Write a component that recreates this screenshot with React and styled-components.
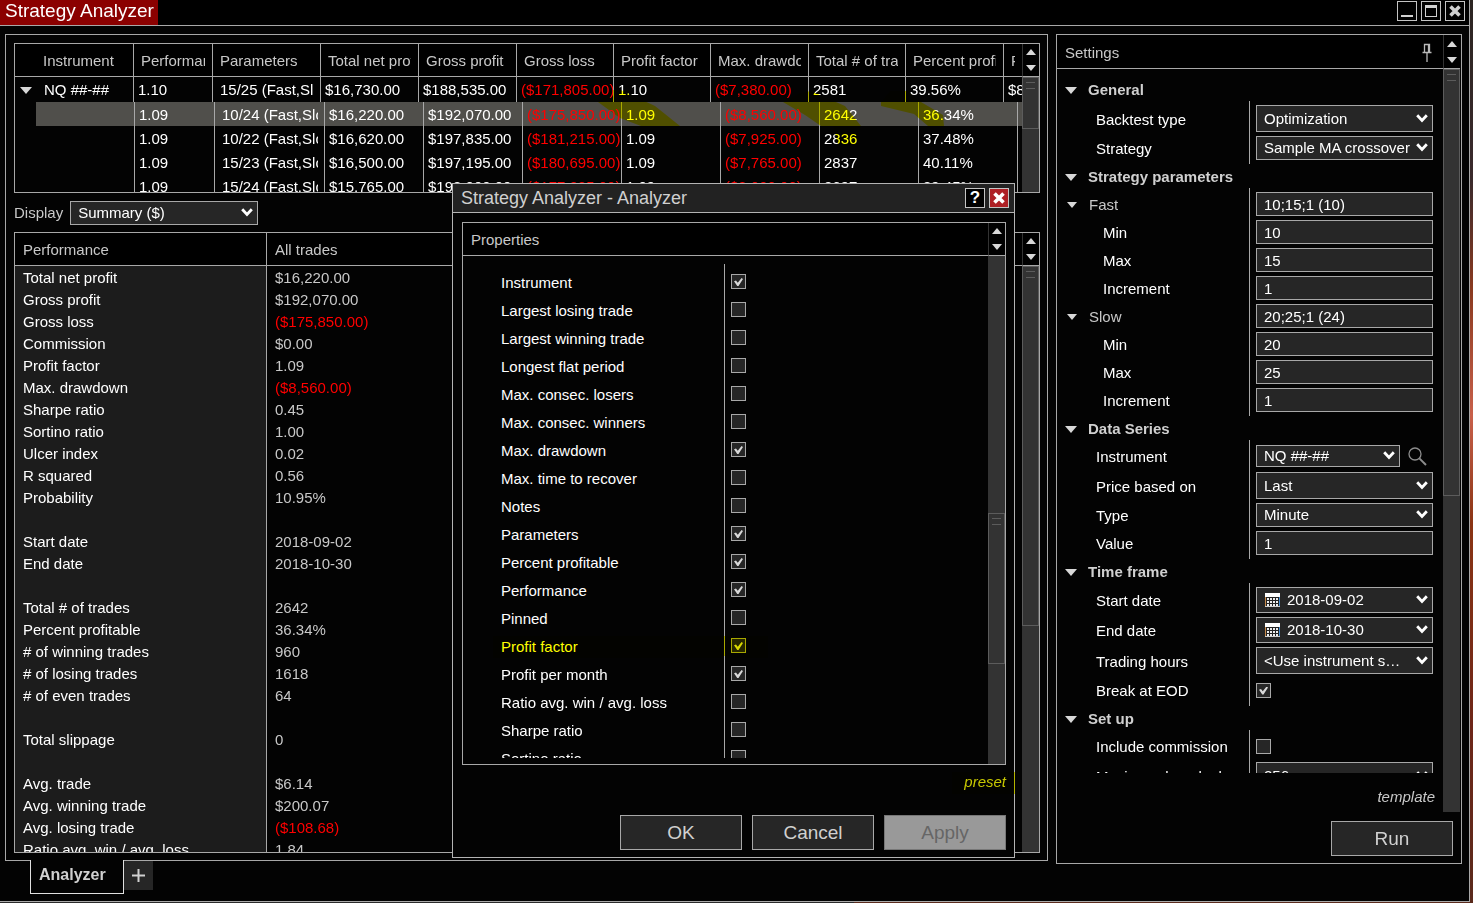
import { useId } from "react";
import styled, { createGlobalStyle } from "styled-components";

const GlobalStyle = createGlobalStyle`
  * {
    box-sizing: border-box;
  }
  body {
    margin: 0;
    background: #000;
    color: #fff;
    font: 15px/20px "Liberation Sans", Arial, sans-serif;
  }
  button, input, select {
    font: inherit;
    color: inherit;
    margin: 0;
  }
`;

const Desktop = styled.div`
  height: 100vh;
  padding: 0 3px 1px 0;
  background:
    linear-gradient(90deg, #2a2a2a 58%, transparent 58%),
    linear-gradient(
      180deg,
      #2c2522 0%,
      #3a2a2c 20%,
      #8a3a20 32%,
      #c8604a 46%,
      #8a3414 58%,
      #6e2618 80%,
      #5a2a1c 100%
    );
`;

const Window = styled.div`
  position: relative;
  display: flex;
  flex-direction: column;
  height: 100%;
  background: #030303;
  border-right: 1px solid #a8a8a8;
  border-bottom: 1px solid #a8a8a8;
  overflow: hidden;
`;

const TitleBar = styled.header`
  display: flex;
  justify-content: space-between;
  flex: 0 0 26px;
  background: #000;
  border-bottom: 1px solid #a8a8a8;
`;

const WindowTitle = styled.h1`
  margin: 0;
  padding: 0 4px 0 5px;
  background: #8b0000;
  font-size: 19px;
  line-height: 22px;
  font-weight: 400;
`;

const WindowButtons = styled.div`
  display: flex;
  gap: 4px;
  padding: 1px 4px 0 0;
`;

const IconButton = styled.button`
  display: flex;
  align-items: center;
  justify-content: center;
  width: 20px;
  height: 20px;
  padding: 0;
  border: 1px solid #c4c4c4;
  background: ${(props) => (props.$danger ? "#ae2025" : "#000")};
  color: ${(props) => (props.$bright ? "#fff" : "#d0d0d0")};
  font-weight: 700;
  font-size: 17px;
`;

const Workspace = styled.main`
  display: flex;
  flex: 1;
  gap: 8px;
  min-height: 0;
  padding: 8px 7px 0 5px;
`;

const MainColumn = styled.div`
  display: flex;
  flex: 1;
  flex-direction: column;
  min-width: 0;
`;

const MainPanel = styled.section`
  display: flex;
  flex: 1;
  flex-direction: column;
  min-height: 0;
  padding: 8px 7px 7px 8px;
  border: 1px solid #a8a8a8;
`;

const Frame = styled.div`
  display: flex;
  flex: ${(props) => props.$size || "1"};
  min-height: 0;
  border: 1px solid #a8a8a8;
  overflow: hidden;
`;

const FrameContent = styled.div`
  flex: 1;
  min-width: 0;
  overflow: hidden;
`;

const Tabs = styled.nav`
  display: flex;
  align-items: flex-start;
  flex: 0 0 40px;
  padding-left: 25px;
`;

const Tab = styled.button`
  width: 94px;
  height: 34px;
  margin-top: -1px;
  padding: 0 8px 3px;
  border: 1px solid #e0e0e0;
  border-top: 0;
  background: #030303;
  color: #d0d0d0;
  font-size: 16px;
  font-weight: 700;
  text-align: left;
`;

const AddTab = styled.button`
  display: flex;
  align-items: center;
  justify-content: center;
  width: 29px;
  height: 29px;
  padding: 0;
  border: 0;
  background: #262626;
`;

/* scroll bars */

const ScrollColumn = styled.div`
  display: flex;
  flex: 0 0 17px;
  flex-direction: column;
`;

const ScrollHead = styled.div`
  display: flex;
  flex: 0 0 ${(props) => props.$height}px;
  flex-direction: column;
  align-items: center;
  justify-content: center;
  gap: 10px;
  background: #000;
  border-left: 1px solid #333;
  border-bottom: 1px solid #a8a8a8;
`;

const Track = styled.div`
  flex: 1;
  min-height: 0;
  padding-top: ${(props) => props.$offset}px;
  background: #333;
`;

const Thumb = styled.div`
  height: ${(props) => props.$length}px;
  padding: 4px 3px;
  border: 1px solid #5c5c5c;
  background: #333;
  &::before {
    content: "";
    display: block;
    height: 5px;
    border: 1px solid #5c5c5c;
    border-width: 1px 0;
  }
`;

/* optimization results */

const resultColumns = "119px 79px 108px 98px 98px 97px 97px 98px 97px 98px 1fr";
const childColumns = "99px 80px 110px 99px 99px 99px 99px 99px 99px 99px 1fr";

const ResultTable = styled.table`
  display: block;
`;

const ResultGroup = styled.tbody`
  display: block;
`;

const ResultHead = styled.thead`
  display: block;
`;

const HeadRow = styled.tr`
  display: grid;
  grid-template-columns: ${resultColumns};
  height: 33px;
  background: #000;
  border-bottom: 1px solid #a8a8a8;
`;

const HeadCell = styled.th`
  padding: 7px 7px 0;
  border-right: 1px solid #a8a8a8;
  color: #c8c8c8;
  font-weight: 400;
  text-align: left;
  overflow: hidden;
  &:first-child {
    padding-left: 28px;
  }
  &:last-child {
    border-right: 0;
  }
`;

const Clip = styled.span`
  display: block;
  overflow: hidden;
  white-space: nowrap;
`;

const ResultRow = styled.tr`
  display: grid;
  grid-template-columns: ${(props) => (props.$child ? childColumns : resultColumns)};
  height: ${(props) => (props.$child ? 24 : 25)}px;
  margin-left: ${(props) => (props.$child ? 21 : 0)}px;
  background: ${(props) => (props.$selected ? "#504f4b" : "transparent")};
`;

const ResultCell = styled.td`
  min-width: 0;
  padding: ${(props) => (props.$wide ? "3px 6px 0 7px" : "3px 0 0 4px")};
  border-right: 1px solid #a8a8a8;
  color: ${(props) => (props.$loss ? "#f00" : "#fff")};
  overflow: hidden;
  &:last-child {
    border-right: 0;
  }
`;

const Expander = styled.span`
  display: flex;
  align-items: center;
  gap: 12px;
  padding-left: 1px;
`;

const DisplayRow = styled.div`
  display: flex;
  align-items: center;
  flex: 0 0 39px;
  gap: 7px;
  color: #c8c8c8;
`;

/* performance summary */

const SummaryTable = styled.table`
  width: 100%;
  border-spacing: 0;
  table-layout: fixed;
`;

const SummaryHead = styled.th`
  width: ${(props) => props.$width || "auto"};
  height: 33px;
  padding: 2px 8px 0;
  background: #000;
  border-right: ${(props) => (props.$width ? "1px solid #a8a8a8" : "0")};
  border-bottom: 1px solid #a8a8a8;
  color: #c8c8c8;
  font-weight: 400;
  text-align: left;
`;

const SummaryLabel = styled.th`
  height: 22px;
  padding: 2px 8px 0;
  background: #1c1c1c;
  border-right: 1px solid #a8a8a8;
  font-weight: 400;
  text-align: left;
`;

const SummaryValue = styled.td`
  padding: 2px 8px 0;
  color: ${(props) => (props.$loss ? "#f00" : "#c8c8c8")};
`;

/* form controls */

const controlHeights = { small: 22, input: 24, date: 26, tall: 27 };

const SelectBox = styled.span`
  position: relative;
  display: block;
  flex: 0 0 auto;
  width: ${(props) => props.$width || "100%"};
`;

const SelectField = styled.select`
  display: block;
  width: 100%;
  height: ${(props) => controlHeights[props.$size]}px;
  padding: 0 20px 0 ${(props) => (props.$icon ? 30 : 7)}px;
  appearance: none;
  border: 1px solid #a8a8a8;
  border-radius: 0;
  background: #262626;
  color: #fff;
`;

const Chevron = styled.svg`
  position: absolute;
  top: calc(50% - 5px);
  right: 5px;
  pointer-events: none;
`;

const FieldIcon = styled.svg`
  position: absolute;
  top: calc(50% - 7px);
  left: 9px;
  pointer-events: none;
`;

const TextField = styled.input`
  display: block;
  width: 100%;
  height: 24px;
  padding: 0 7px;
  border: 1px solid #a8a8a8;
  background: #262626;
  color: #fff;
`;

const CheckField = styled.input`
  display: block;
  width: 15px;
  height: 15px;
  padding: 3px 2px;
  appearance: none;
  border: 1px solid #a8a8a8;
  background: #262626;
  &:checked::before {
    content: "";
    display: block;
    width: 9px;
    height: 8px;
    background: #d8d8d8;
    clip-path: polygon(0 40%, 22% 32%, 42% 58%, 84% 0, 100% 12%, 50% 100%, 36% 100%);
  }
`;

const Button = styled.button`
  width: 122px;
  height: 35px;
  padding: 0;
  border: 1px solid #a8a8a8;
  background: #262626;
  color: #d0d0d0;
  font-size: 19px;
  &:disabled {
    border-color: #777;
    background: #999;
    color: #666;
  }
`;

const TextLink = styled.a`
  color: #c8c8c8;
  font-style: italic;
  text-decoration: none;
`;

/* settings */

const Sidebar = styled.aside`
  display: flex;
  flex: 0 0 406px;
  flex-direction: column;
  margin-bottom: 37px;
  border: 1px solid #a8a8a8;
`;

const SidebarBody = styled.div`
  display: flex;
  flex: 1;
  min-height: 0;
  padding-right: 1px;
`;

const SidebarContent = styled.div`
  display: flex;
  flex: 1;
  flex-direction: column;
  min-width: 0;
`;

const PanelHead = styled.div`
  display: flex;
  align-items: center;
  justify-content: space-between;
  flex: 0 0 ${(props) => props.$height}px;
  height: ${(props) => props.$height}px;
  padding: 2px 10px 0 8px;
  background: #000;
  border-bottom: 1px solid #a8a8a8;
  color: #c8c8c8;
`;

const SettingsList = styled.div`
  flex: 1;
  min-height: 0;
  padding-top: 8px;
  overflow: hidden;
`;

const SectionTitle = styled.h2`
  display: flex;
  align-items: center;
  gap: 11px;
  height: 24px;
  margin: 0;
  padding: 2px 0 0 8px;
  color: #d0d0d0;
  font-size: 15px;
  font-weight: 700;
`;

const SettingRow = styled.div`
  display: grid;
  grid-template-columns: 193px 1fr;
  &:last-child > * {
    min-height: 32px;
    padding-bottom: 4px;
  }
`;

const labelIndent = { group: 10, item: 39, nested: 46 };

const SettingLabel = styled.label`
  display: flex;
  align-items: center;
  gap: 12px;
  min-width: 0;
  padding: 6px 6px 0 ${(props) => labelIndent[props.$level]}px;
  border-right: 1px solid #a8a8a8;
  color: ${(props) => (props.$level === "group" ? "#c8c8c8" : "#fff")};
`;

const LabelText = styled.span`
  overflow: hidden;
  text-overflow: ellipsis;
  white-space: nowrap;
`;

const SettingControl = styled.div`
  display: flex;
  align-items: center;
  gap: 8px;
  min-height: 28px;
  padding: 4px 10px 0 6px;
`;

const TemplateRow = styled.div`
  flex: 0 0 39px;
  padding: 14px 8px 0;
  text-align: right;
`;

const RunRow = styled.div`
  display: flex;
  justify-content: flex-end;
  padding: 9px 8px 7px;
`;

/* dialog */

const Dialog = styled.section`
  position: absolute;
  top: 183px;
  left: 452px;
  display: flex;
  flex-direction: column;
  width: 563px;
  height: 675px;
  background: #030303;
  border: 1px solid #b4b4b4;
`;

const DialogTitle = styled.header`
  display: flex;
  align-items: center;
  gap: 4px;
  flex: 0 0 29px;
  padding: 0 5px 0 8px;
  background: #222;
  border-bottom: 1px solid #b4b4b4;
  color: #d0d0d0;
`;

const DialogName = styled.h2`
  flex: 1;
  margin: 0;
  font-size: 18px;
  font-weight: 400;
`;

const DialogBody = styled.div`
  display: flex;
  flex: 1;
  flex-direction: column;
  min-height: 0;
  padding: 9px 8px 7px 9px;
`;

const PropertyArea = styled(FrameContent)`
  display: flex;
  flex-direction: column;
`;

const PropertyList = styled.div`
  flex: 1;
  min-height: 0;
  margin: 8px 0 6px;
  overflow: hidden;
`;

const PropertyRow = styled.div`
  position: relative;
  display: grid;
  grid-template-columns: 262px 1fr;
  height: 28px;
`;

const PropertyLabel = styled.label`
  padding: 9px 0 0 38px;
  border-right: 1px solid #a8a8a8;
  white-space: nowrap;
`;

const PropertyControl = styled.div`
  padding: 10px 0 0 6px;
`;

const PresetRow = styled.div`
  position: relative;
  flex: 0 0 50px;
  padding-top: 7px;
  text-align: right;
`;

const DialogActions = styled.div`
  display: flex;
  justify-content: flex-end;
  gap: 10px;
`;

/* yellow highlighter strokes */

const Marker = styled.span`
  position: absolute;
  top: ${(props) => props.$top}px;
  right: ${(props) => props.$right};
  left: ${(props) => props.$left};
  height: 22px;
  background: #ff0;
  mix-blend-mode: multiply;
  pointer-events: none;
`;

const MarkerStrokes = styled.svg`
  position: absolute;
  top: 76px;
  left: 590px;
  mix-blend-mode: multiply;
  pointer-events: none;
`;

const headings = [
  "Instrument",
  "Performance",
  "Parameters",
  "Total net profit",
  "Gross profit",
  "Gross loss",
  "Profit factor",
  "Max. drawdown",
  "Total # of trades",
  "Percent profitable",
  "Profit per month",
];

const parentResult = ["NQ ##-##", "1.10", "15/25 (Fast,Slow)", "$16,730.00", "$188,535.00", "($171,805.00)", "1.10", "($7,380.00)", "2581", "39.56%", "$8,912.00"];

const childResults = [
  ["", "1.09", "10/24 (Fast,Slow)", "$16,220.00", "$192,070.00", "($175,850.00)", "1.09", "($8,560.00)", "2642", "36.34%", ""],
  ["", "1.09", "10/22 (Fast,Slow)", "$16,620.00", "$197,835.00", "($181,215.00)", "1.09", "($7,925.00)", "2836", "37.48%", ""],
  ["", "1.09", "15/23 (Fast,Slow)", "$16,500.00", "$197,195.00", "($180,695.00)", "1.09", "($7,765.00)", "2837", "40.11%", ""],
  ["", "1.09", "15/24 (Fast,Slow)", "$15,765.00", "$193,000.00", "($177,235.00)", "1.09", "($8,000.00)", "2697", "39.45%", ""],
];

const summary = [
  ["Total net profit", "$16,220.00"],
  ["Gross profit", "$192,070.00"],
  ["Gross loss", "($175,850.00)"],
  ["Commission", "$0.00"],
  ["Profit factor", "1.09"],
  ["Max. drawdown", "($8,560.00)"],
  ["Sharpe ratio", "0.45"],
  ["Sortino ratio", "1.00"],
  ["Ulcer index", "0.02"],
  ["R squared", "0.56"],
  ["Probability", "10.95%"],
  ["", ""],
  ["Start date", "2018-09-02"],
  ["End date", "2018-10-30"],
  ["", ""],
  ["Total # of trades", "2642"],
  ["Percent profitable", "36.34%"],
  ["# of winning trades", "960"],
  ["# of losing trades", "1618"],
  ["# of even trades", "64"],
  ["", ""],
  ["Total slippage", "0"],
  ["", ""],
  ["Avg. trade", "$6.14"],
  ["Avg. winning trade", "$200.07"],
  ["Avg. losing trade", "($108.68)"],
  ["Ratio avg. win / avg. loss", "1.84"],
];

const properties = [
  ["Instrument", true],
  ["Largest losing trade", false],
  ["Largest winning trade", false],
  ["Longest flat period", false],
  ["Max. consec. losers", false],
  ["Max. consec. winners", false],
  ["Max. drawdown", true],
  ["Max. time to recover", false],
  ["Notes", false],
  ["Parameters", true],
  ["Percent profitable", true],
  ["Performance", true],
  ["Pinned", false],
  ["Profit factor", true],
  ["Profit per month", true],
  ["Ratio avg. win / avg. loss", false],
  ["Sharpe ratio", false],
  ["Sortino ratio", false],
];

const sections = [
  {
    title: "General",
    rows: [
      { label: "Backtest type", type: "select", size: "tall", value: "Optimization" },
      { label: "Strategy", type: "select", size: "input", value: "Sample MA crossover" },
    ],
  },
  {
    title: "Strategy parameters",
    rows: [
      { label: "Fast", level: "group", value: "10;15;1 (10)" },
      { label: "Min", level: "nested", value: "10" },
      { label: "Max", level: "nested", value: "15" },
      { label: "Increment", level: "nested", value: "1" },
      { label: "Slow", level: "group", value: "20;25;1 (24)" },
      { label: "Min", level: "nested", value: "20" },
      { label: "Max", level: "nested", value: "25" },
      { label: "Increment", level: "nested", value: "1" },
    ],
  },
  {
    title: "Data Series",
    rows: [
      { label: "Instrument", type: "search", size: "small", value: "NQ ##-##" },
      { label: "Price based on", type: "select", size: "tall", value: "Last" },
      { label: "Type", type: "select", size: "input", value: "Minute" },
      { label: "Value", value: "1" },
    ],
  },
  {
    title: "Time frame",
    rows: [
      { label: "Start date", type: "date", size: "date", value: "2018-09-02" },
      { label: "End date", type: "date", size: "date", value: "2018-10-30" },
      { label: "Trading hours", type: "select", size: "tall", value: "<Use instrument s…" },
      { label: "Break at EOD", type: "check", value: true },
    ],
  },
  {
    title: "Set up",
    rows: [
      { label: "Include commission", type: "check", value: false },
      { label: "Maximum bars look back", type: "select", size: "tall", value: "256" },
    ],
  },
];

const isLoss = (value) => value.startsWith("(");

function Triangle({ up, width = 12, height = 7 }) {
  const points = up
    ? `0,${height} ${width},${height} ${width / 2},0`
    : `0,0 ${width},0 ${width / 2},${height}`;
  return (
    <svg width={width} height={height} aria-hidden="true">
      <polygon points={points} fill="#d8d8d8" />
    </svg>
  );
}

function CloseIcon() {
  return (
    <svg width="12" height="12" viewBox="0 0 12 12" aria-hidden="true">
      <path d="M1.5 1.5l9 9M10.5 1.5l-9 9" stroke="currentColor" strokeWidth="3.6" />
    </svg>
  );
}

function Scroller({ head = 33, offset = 0, length }) {
  return (
    <ScrollColumn>
      <ScrollHead $height={head}>
        <Triangle up width={10} height={6} />
        <Triangle width={10} height={6} />
      </ScrollHead>
      <Track $offset={offset}>
        <Thumb $length={length} />
      </Track>
    </ScrollColumn>
  );
}

function Select({ id, value, size, width, icon }) {
  return (
    <SelectBox $width={width}>
      <SelectField id={id} $size={size} $icon={icon} defaultValue={value}>
        <option>{value}</option>
      </SelectField>
      {icon && (
        <FieldIcon width="15" height="14" viewBox="0 0 15 14" aria-hidden="true">
          <rect width="15" height="14" fill="#222" />
          <rect width="15" height="4" fill="#fff" />
          <path d="M2 6h11M2 9h11M2 12h11" stroke="#eee" strokeWidth="2" strokeDasharray="2 1" />
          <path d="M.5 4v10" stroke="#c98a4a" />
          <path d="M14.5 4v10" stroke="#4a90d0" />
          <path d="M0 13.5h15" stroke="#ccc" />
        </FieldIcon>
      )}
      <Chevron width="12" height="9" viewBox="0 0 12 9" aria-hidden="true">
        <path d="M1.2 1.2L6 6.4l4.8-5.2" fill="none" stroke="#fff" strokeWidth="2.8" />
      </Chevron>
    </SelectBox>
  );
}

function Control({ id, row }) {
  if (row.type === "check") {
    return <CheckField id={id} type="checkbox" defaultChecked={row.value} />;
  }
  if (row.type === "search") {
    return (
      <>
        <Select id={id} value={row.value} size={row.size} width="144px" />
        <svg width="19" height="19" viewBox="0 0 19 19" fill="none" stroke="#8c8c8c" aria-hidden="true">
          <circle cx="7" cy="7" r="6" strokeWidth="1.3" />
          <path d="M11.4 11.4l6.6 6.6" strokeWidth="2" />
        </svg>
      </>
    );
  }
  if (row.type === "select" || row.type === "date") {
    return <Select id={id} value={row.value} size={row.size} icon={row.type === "date"} />;
  }
  return <TextField id={id} defaultValue={row.value} />;
}

function Setting({ row }) {
  const id = useId();
  const level = row.level || "item";
  return (
    <SettingRow>
      <SettingLabel htmlFor={id} $level={level}>
        {level === "group" && <Triangle width={10} height={6} />}
        <LabelText>{row.label}</LabelText>
      </SettingLabel>
      <SettingControl>
        <Control id={id} row={row} />
      </SettingControl>
    </SettingRow>
  );
}

function Settings() {
  return (
    <Sidebar>
      <SidebarBody>
        <SidebarContent>
          <PanelHead $height={34}>
            Settings
            <svg width="12" height="20" viewBox="0 0 12 20" fill="none" stroke="#b8b8b8" aria-hidden="true">
              <path d="M3.5 9V1.5h5V9M1.5 9.5h9M7.5 2v7" strokeWidth="1.3" />
              <path d="M6 10v9" strokeWidth="1.3" />
            </svg>
          </PanelHead>
          <SettingsList>
            {sections.map((section) => (
              <section key={section.title}>
                <SectionTitle>
                  <Triangle />
                  {section.title}
                </SectionTitle>
                {section.rows.map((row, index) => (
                  <Setting key={index} row={row} />
                ))}
              </section>
            ))}
          </SettingsList>
          <TemplateRow>
            <TextLink href="#template">template</TextLink>
          </TemplateRow>
        </SidebarContent>
        <Scroller head={34} length={427} />
      </SidebarBody>
      <RunRow>
        <Button type="button">Run</Button>
      </RunRow>
    </Sidebar>
  );
}

function ResultCells({ values }) {
  return values.map((value, index) => (
    <ResultCell key={index} $wide={index === 2} $loss={isLoss(value)}>
      {index === 0 && value ? (
        <Expander>
          <Triangle />
          {value}
        </Expander>
      ) : (
        <Clip>{value}</Clip>
      )}
    </ResultCell>
  ));
}

function Results() {
  return (
    <Frame $size="0 0 150px">
      <FrameContent>
        <ResultTable>
          <ResultHead>
            <HeadRow>
              {headings.map((heading) => (
                <HeadCell key={heading}>
                  <Clip>{heading}</Clip>
                </HeadCell>
              ))}
            </HeadRow>
          </ResultHead>
          <ResultGroup>
            <ResultRow>
              <ResultCells values={parentResult} />
            </ResultRow>
            {childResults.map((values, index) => (
              <ResultRow key={index} $child $selected={index === 0}>
                <ResultCells values={values} />
              </ResultRow>
            ))}
          </ResultGroup>
        </ResultTable>
      </FrameContent>
      <Scroller length={52} />
    </Frame>
  );
}

function Summary() {
  return (
    <Frame>
      <FrameContent>
        <SummaryTable>
          <thead>
            <tr>
              <SummaryHead $width="252px">Performance</SummaryHead>
              <SummaryHead>All trades</SummaryHead>
            </tr>
          </thead>
          <tbody>
            {summary.map(([label, value], index) => (
              <tr key={index}>
                <SummaryLabel>{label}</SummaryLabel>
                <SummaryValue $loss={isLoss(value)}>{value}</SummaryValue>
              </tr>
            ))}
          </tbody>
        </SummaryTable>
      </FrameContent>
      <Scroller length={360} />
    </Frame>
  );
}

function Property({ name, checked }) {
  const id = useId();
  return (
    <PropertyRow>
      <PropertyLabel htmlFor={id}>{name}</PropertyLabel>
      <PropertyControl>
        <CheckField id={id} type="checkbox" defaultChecked={checked} />
      </PropertyControl>
      {name === "Profit factor" && <Marker $top={8} $left="30px" $right="220px" />}
    </PropertyRow>
  );
}

function PropertiesDialog() {
  return (
    <Dialog role="dialog" aria-label="Strategy Analyzer - Analyzer">
      <DialogTitle>
        <DialogName>Strategy Analyzer - Analyzer</DialogName>
        <IconButton type="button" $bright>
          ?
        </IconButton>
        <IconButton type="button" $bright $danger aria-label="Close">
          <CloseIcon />
        </IconButton>
      </DialogTitle>
      <DialogBody>
        <Frame>
          <PropertyArea>
            <PanelHead $height={33}>Properties</PanelHead>
            <PropertyList>
              {properties.map(([name, checked]) => (
                <Property key={name} name={name} checked={checked} />
              ))}
            </PropertyList>
          </PropertyArea>
          <Scroller offset={257} length={151} />
        </Frame>
        <PresetRow>
          <TextLink href="#preset">preset</TextLink>
          <Marker $top={7} $left="490px" $right="-9px" />
        </PresetRow>
        <DialogActions>
          <Button type="button">OK</Button>
          <Button type="button">Cancel</Button>
          <Button type="button" disabled>
            Apply
          </Button>
        </DialogActions>
      </DialogBody>
    </Dialog>
  );
}

function App() {
  return (
    <Desktop>
      <GlobalStyle />
      <Window>
        <TitleBar>
          <WindowTitle>Strategy Analyzer</WindowTitle>
          <WindowButtons>
            <IconButton type="button" aria-label="Minimize">
              <svg width="12" height="12" aria-hidden="true">
                <rect y="10" width="12" height="2" fill="currentColor" />
              </svg>
            </IconButton>
            <IconButton type="button" aria-label="Maximize">
              <svg width="12" height="12" aria-hidden="true">
                <rect x=".5" y=".5" width="11" height="11" fill="none" stroke="currentColor" />
                <rect width="12" height="3" fill="currentColor" />
              </svg>
            </IconButton>
            <IconButton type="button" aria-label="Close">
              <CloseIcon />
            </IconButton>
          </WindowButtons>
        </TitleBar>
        <Workspace>
          <MainColumn>
            <MainPanel>
              <Results />
              <DisplayRow>
                <label htmlFor="display">Display</label>
                <Select id="display" value="Summary ($)" size="input" width="188px" />
              </DisplayRow>
              <Summary />
            </MainPanel>
            <Tabs>
              <Tab type="button">Analyzer</Tab>
              <AddTab type="button" aria-label="New tab">
                <svg width="13" height="13" aria-hidden="true">
                  <path d="M6.5 0v13M0 6.5h13" stroke="#d0d0d0" strokeWidth="2" />
                </svg>
              </AddTab>
            </Tabs>
          </MainColumn>
          <Settings />
        </Workspace>
        <MarkerStrokes width="370" height="72" viewBox="590 76 370 72" aria-hidden="true">
          <g fill="#ff0">
            <path d="M598 102L611 90L621 90L655 106L680 126H641L620 118Z" />
            <path d="M783 102L800 93L811 91L845 106L861 126L856 144H838L833 126H821L805 115Z" />
            <path d="M881 106V102L890 91H907L921 102L943 115L944 126H928L914 114Z" />
          </g>
        </MarkerStrokes>
        <PropertiesDialog />
      </Window>
    </Desktop>
  );
}

export default App;
